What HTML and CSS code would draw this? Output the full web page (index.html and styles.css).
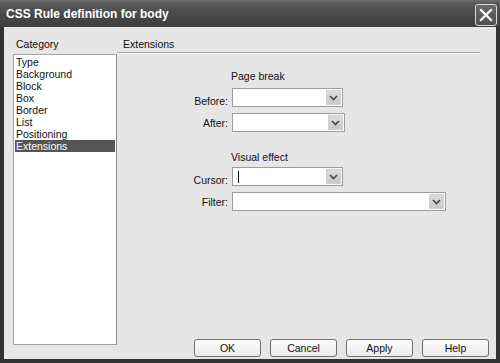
FILE: index.html
```html
<!DOCTYPE html>
<html>
<head>
<meta charset="utf-8">
<link rel="stylesheet" href="styles.css">
</head>
<body>
<div class="window">
  <div class="titlebar">
    <span class="title">CSS Rule definition for body</span>
    <span class="close"><svg width="14" height="14" viewBox="0 0 14 14"><path d="M2 2 L12 12 M12 2 L2 12" stroke="#fff" stroke-width="2.2" stroke-linecap="square"/></svg></span>
  </div>
  <div class="content">
    <div class="leftcol">
      <div class="cat-label">Category</div>
      <ul class="listbox">
        <li>Type</li>
        <li>Background</li>
        <li>Block</li>
        <li>Box</li>
        <li>Border</li>
        <li>List</li>
        <li>Positioning</li>
        <li class="sel">Extensions</li>
      </ul>
    </div>
    <div class="rightcol">
      <div class="panel-head">Extensions</div>
      <div class="form">
        <div class="heading heading-first">Page break</div>
        <label class="lbl">Before:</label>
        <div class="select w110"><span class="val"></span><span class="arrow"><svg width="9" height="6" viewBox="0 0 9 6"><path d="M1 1 L4.5 4.5 L8 1" fill="none" stroke="#444" stroke-width="1.6"/></svg></span></div>
        <label class="lbl">After:</label>
        <div class="select w113"><span class="val"></span><span class="arrow"><svg width="9" height="6" viewBox="0 0 9 6"><path d="M1 1 L4.5 4.5 L8 1" fill="none" stroke="#444" stroke-width="1.6"/></svg></span></div>
        <div class="heading heading-second">Visual effect</div>
        <label class="lbl">Cursor:</label>
        <div class="select w110"><span class="val"><span class="caret"></span></span><span class="arrow"><svg width="9" height="6" viewBox="0 0 9 6"><path d="M1 1 L4.5 4.5 L8 1" fill="none" stroke="#444" stroke-width="1.6"/></svg></span></div>
        <label class="lbl">Filter:</label>
        <div class="select w214"><span class="val"></span><span class="arrow"><svg width="9" height="6" viewBox="0 0 9 6"><path d="M1 1 L4.5 4.5 L8 1" fill="none" stroke="#444" stroke-width="1.6"/></svg></span></div>
      </div>
      <div class="buttons">
        <button class="btn">OK</button>
        <button class="btn">Cancel</button>
        <button class="btn">Apply</button>
        <button class="btn">Help</button>
      </div>
    </div>
  </div>
</div>
</body>
</html>
```
FILE: styles.css
```css
* { box-sizing: border-box; }
html, body { margin: 0; padding: 0; }
body {
  width: 500px;
  height: 363px;
  background: #2e2e2e;
  font-family: "Liberation Sans", Arial, sans-serif;
  font-size: 10.5px;
  color: #111;
  overflow: hidden;
}
.window {
  width: 500px;
  height: 363px;
  display: flex;
  flex-direction: column;
  background: #333;
  padding: 0 4px 4px 4px;
}
.titlebar {
  height: 27px;
  margin: 0 -4px;
  background: linear-gradient(#707070 0px, #5a5a5a 3px, #4a4a4a 14px, #3e3e3e 27px);
  display: flex;
  align-items: center;
  justify-content: space-between;
  padding: 0 3px 0 6px;
}
.title {
  color: #fff;
  font-weight: bold;
  font-size: 12px;
  font-family: "Liberation Sans", Arial, sans-serif;
}
.close {
  width: 22px;
  height: 22px;
  border: 1px solid #d8d8d8;
  border-radius: 3px;
  background: linear-gradient(#6a6a6a, #505050);
  display: flex;
  align-items: center;
  justify-content: center;
  margin-top: 2px;
}
.content {
  flex: 1;
  background: #e6e6e6;
  display: flex;
  padding: 0 0 0 9px;
}
.leftcol {
  width: 104px;
  display: flex;
  flex-direction: column;
}
.cat-label {
  padding-left: 3px;
  height: 27px;
  padding-top: 11px;
  line-height: 12px;
}
.listbox {
  list-style: none;
  margin: 0;
  padding: 1px 1px 0 1px;
  height: 291px;
  background: #fff;
  border: 1px solid #a2a2a2;
  border-right-color: #8a8a8a;
}
.listbox li {
  height: 12px;
  line-height: 12px;
  padding-left: 1px;
}
.listbox li.sel {
  background: #555;
  color: #fff;
}
.rightcol {
  flex: 1;
  display: flex;
  flex-direction: column;
}
.panel-head {
  padding: 11px 0 0 6px;
  line-height: 12px;
  margin-right: 16px;
  border-bottom: 1px solid #a8a8a8;
  box-shadow: 0 1px 0 #fff;
  height: 26px;
}
.form {
  display: grid;
  grid-template-columns: 111px auto;
  column-gap: 4px;
  align-items: center;
  justify-items: start;
}
.heading {
  grid-column: 2;
  line-height: 12px;
  margin-left: -1px;
}
.heading-first { margin-top: 17px; margin-bottom: 6px; }
.heading-second { margin-top: 13px; margin-bottom: 4px; }
.lbl {
  justify-self: end;
  line-height: 12px;
}
.select {
  height: 19px;
  background: #fff;
  border: 1px solid #9c9c9c;
  display: flex;
  align-items: center;
  justify-content: space-between;
  padding: 1px;
  margin-bottom: 6px;
}
.select + .lbl { margin-bottom: 6px; }
.w110 { width: 111px; }
.w113 { width: 113px; }
.w214 { width: 214px; }
.val {
  flex: 1;
  height: 100%;
  display: flex;
  align-items: center;
  padding-left: 4px;
}
.caret {
  width: 1px;
  height: 12px;
  background: #000;
}
.arrow {
  width: 15px;
  height: 15px;
  background: linear-gradient(#dcdcdc, #c8c8c8);
  border: 1px solid #d0d0d0;
  display: flex;
  align-items: center;
  justify-content: center;
}
.buttons {
  margin-top: auto;
  display: flex;
  gap: 9px;
  padding-left: 77px;
  margin-bottom: 2px;
}
.btn {
  width: 67px;
  height: 18px;
  border: 1px solid #707070;
  border-radius: 3px;
  background: linear-gradient(#fdfdfd, #eaeaea);
  font-family: "Liberation Sans", Arial, sans-serif;
  font-size: 10.5px;
  color: #111;
  padding: 0;
  line-height: 16px;
}
```
